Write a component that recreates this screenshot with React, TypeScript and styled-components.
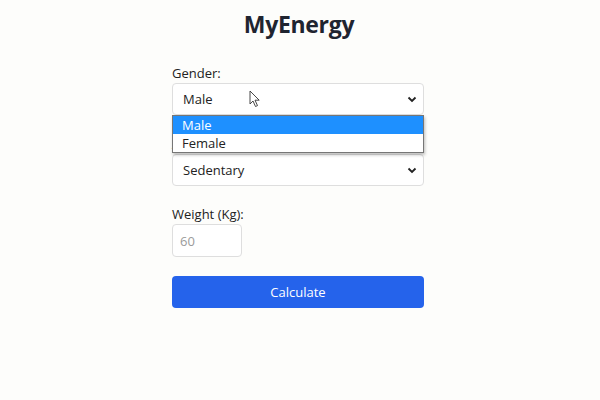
import React from "react";
import styled, { createGlobalStyle } from "styled-components";

const Global = createGlobalStyle`
  html, body { margin: 0; padding: 0; background: #fdfdfb; }
  body { font-family: "Open Sans", "Noto Sans", sans-serif; color: #212529; }
`;

const Page = styled.div`
  width: 600px;
  height: 400px;
  display: flex;
  flex-direction: column;
  align-items: center;
`;

const Title = styled.h1`
  margin: 0;
  padding-top: 8px;
  padding-right: 2px;
  font-size: 23px;
  line-height: 32px;
  font-weight: 700;
  color: #1f2430;
  letter-spacing: -0.3px;
`;

const Form = styled.div`
  width: 252px;
  margin-top: 23px;
  margin-right: 4px;
  display: flex;
  flex-direction: column;
`;

const Group = styled.div<{ $mb: number }>`
  position: relative;
  display: flex;
  flex-direction: column;
  margin-bottom: ${(p) => p.$mb}px;
`;

const Label = styled.label`
  font-size: 13px;
  line-height: 20px;
  color: #222;
`;

const SelectBox = styled.div`
  box-sizing: border-box;
  height: 32px;
  border: 1px solid #dedede;
  border-radius: 4px;
  background: #fff;
  display: flex;
  align-items: center;
  justify-content: space-between;
  padding: 0 6px 0 10px;
  font-size: 13px;
  color: #222;
`;

const Dropdown = styled.div`
  position: absolute;
  top: 52px;
  left: 0;
  right: 0;
  box-sizing: border-box;
  background: #fff;
  border: 1px solid #767676;
  box-shadow: 1px 2px 3px rgba(0, 0, 0, 0.25);
  z-index: 2;
`;

const Option = styled.div<{ $active?: boolean }>`
  height: 18px;
  line-height: 18px;
  padding-left: 9px;
  font-size: 13px;
  background: ${(p) => (p.$active ? "#1e90ff" : "transparent")};
  color: ${(p) => (p.$active ? "#fff" : "#222")};
`;

const Input = styled.div`
  box-sizing: border-box;
  width: 70px;
  height: 33px;
  border: 1px solid #dedede;
  border-radius: 4px;
  background: #fff;
  display: flex;
  align-items: center;
  padding-left: 7px;
  font-size: 13px;
  color: #9b9b9b;
`;

const Button = styled.button`
  box-sizing: border-box;
  height: 32px;
  border: none;
  border-radius: 4px;
  background: #2563eb;
  color: #fff;
  font-family: inherit;
  font-size: 13px;
  padding: 0;
`;

const Cursor = styled.svg`
  position: absolute;
  left: 77px;
  top: 27px;
  z-index: 3;
`;

const Chevron = () => (
  <svg width="10" height="7" viewBox="0 0 10 7">
    <path d="M1.5 1.5 L5 5 L8.5 1.5" fill="none" stroke="#222" strokeWidth="1.8" />
  </svg>
);

export default function App() {
  return (
    <Page>
      <Global />
      <Title>MyEnergy</Title>
      <Form>
        <Group $mb={19}>
          <Label>Gender:</Label>
          <SelectBox>
            <span>Male</span>
            <Chevron />
          </SelectBox>
          <Cursor width="12" height="18" viewBox="0 0 12 18">
            <path d="M1 1 L1 14 L4 11 L6.5 16.5 L8.5 15.6 L6 10.2 L10.2 10.2 Z" fill="#fff" stroke="#333" strokeWidth="0.9" strokeLinejoin="round" />
          </Cursor>
          <Dropdown>
            <Option $active>Male</Option>
            <Option>Female</Option>
          </Dropdown>
        </Group>
        <Group $mb={18}>
          <Label>Activity level:</Label>
          <SelectBox>
            <span>Sedentary</span>
            <Chevron />
          </SelectBox>
        </Group>
        <Group $mb={19}>
          <Label>Weight (Kg):</Label>
          <Input>60</Input>
        </Group>
        <Button>Calculate</Button>
      </Form>
    </Page>
  );
}
